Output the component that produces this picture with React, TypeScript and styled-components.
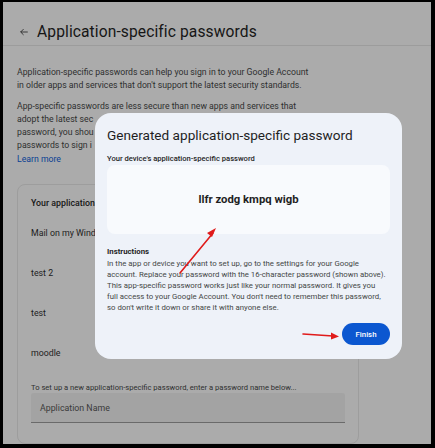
import React from "react";
import styled, { createGlobalStyle } from "styled-components";

const Global = createGlobalStyle`
  html, body { margin: 0; padding: 0; background: #000; }
  body { font-family: Roboto, "Noto Sans", Arial, sans-serif; }
  * { box-sizing: border-box; }
`;

const Frame = styled.div`
  width: 435px;
  height: 448px;
  background: #000;
  padding: 2px 4px 4px 3px;
`;

const Screen = styled.div`
  position: relative;
  width: 100%;
  height: 100%;
  background: #ababab;
  overflow: hidden;
  color: #2c2d2d;
`;

const Header = styled.header`
  display: flex;
  align-items: center;
  gap: 8px;
  height: 44px;
  padding: 16px 0 0 16px;
  border-bottom: 1px solid #9c9c9c;
`;

const BackBtn = styled.span`
  display: flex;
  width: 10px;
  height: 10px;
  color: #222;
`;

const Title = styled.h1`
  margin: 0;
  font-size: 15.6px;
  font-weight: 400;
  color: #161616;
  letter-spacing: 0.1px;
`;

const Content = styled.main`
  padding: 20px 0 0 14px;
  width: 356px;
`;

const Para = styled.p`
  margin: 0 0 7px;
  font-size: 8.7px;
  line-height: 13.3px;
  color: #2e2f2f;
  white-space: nowrap;
`;

const Link = styled.a`
  color: #0a3f93;
  text-decoration: none;
`;

const Card = styled.section`
  margin-top: 18px;
  border: 1px solid #9d9d9d;
  border-radius: 8px;
  padding: 11px 13px 20px;
`;

const CardTitle = styled.div`
  font-size: 8.8px;
  font-weight: 500;
  color: #161616;
  height: 26px;
  line-height: 14px;
`;

const AppRow = styled.div`
  font-size: 8.8px;
  color: #1d1d1d;
  height: 40px;
  line-height: 14px;
  padding-top: 4px;
`;

const Hint = styled.div`
  font-size: 7.6px;
  color: #2e2f2f;
  margin-top: 0;
  line-height: 11px;
`;

const NameInput = styled.div`
  height: 30px;
  background: #a3a3a3;
  border-bottom: 1px solid #6a6a6a;
  border-radius: 3px 3px 0 0;
  padding-left: 9px;
  display: flex;
  align-items: center;
  font-size: 8.8px;
  color: #3a3a3a;
`;

const Dialog = styled.div`
  position: absolute;
  left: 92px;
  top: 111px;
  width: 307px;
  height: 246px;
  background: #eef2f9;
  border-radius: 16px;
  padding: 13px 12px 0;
  display: flex;
  flex-direction: column;
`;

const DialogTitle = styled.h2`
  margin: 0;
  font-size: 13.6px;
  font-weight: 400;
  color: #1f1f1f;
  line-height: 18px;
`;

const Label = styled.div`
  margin-top: 10px;
  font-size: 7.6px;
  font-weight: 500;
  color: #1f1f1f;
  line-height: 10px;
`;

const PassBox = styled.div`
  margin-top: 1px;
  height: 69px;
  background: #f8fafd;
  border-radius: 8px;
  display: flex;
  align-items: center;
  justify-content: center;
  font-size: 11.3px;
  font-weight: 700;
  color: #1f1f1f;
`;

const InstrTitle = styled.div`
  margin-top: 13px;
  font-size: 7.8px;
  font-weight: 700;
  color: #1f1f1f;
  line-height: 10px;
`;

const InstrText = styled.p`
  margin: 1px 0 0;
  font-size: 7.8px;
  line-height: 11px;
  color: #444746;
`;

const Actions = styled.div`
  display: flex;
  justify-content: flex-end;
  margin-top: 10px;
`;

const FinishBtn = styled.button`
  width: 48px;
  height: 22px;
  border: none;
  border-radius: 11px;
  background: #0b57d0;
  color: #fff;
  font-family: inherit;
  font-size: 7.8px;
  font-weight: 500;
  padding: 0;
`;

const Arrows = styled.svg`
  position: absolute;
  left: 0;
  top: 0;
  width: 100%;
  height: 100%;
  pointer-events: none;
`;

const apps = ["Mail on my Windows Computer", "test 2", "test", "moodle"];

export default function App() {
  return (
    <>
      <Global />
      <Frame>
        <Screen>
          <Header>
            <BackBtn>
              <svg viewBox="0 0 24 24" width="10" height="10" fill="none" stroke="currentColor" strokeWidth="2">
                <path d="M21 12H4M11 5l-7 7 7 7" />
              </svg>
            </BackBtn>
            <Title>Application-specific passwords</Title>
          </Header>
          <Content>
            <Para>
              Application-specific passwords can help you sign in to your Google Account
              <br />
              in older apps and services that don't support the latest security standards.
            </Para>
            <Para>
              App-specific passwords are less secure than new apps and services that
              <br />
              adopt the latest sec
              <br />
              password, you shou
              <br />
              passwords to sign i
              <br />
              <Link>Learn more</Link>
            </Para>
            <Card>
              <CardTitle>Your application passwords</CardTitle>
              {apps.map((a) => (
                <AppRow key={a}>{a}</AppRow>
              ))}
              <Hint>To set up a new application-specific password, enter a password name below...</Hint>
              <NameInput>Application Name</NameInput>
            </Card>
          </Content>
          <Dialog>
            <DialogTitle>Generated application-specific password</DialogTitle>
            <Label>Your device's application-specific password</Label>
            <PassBox>llfr zodg kmpq wigb</PassBox>
            <InstrTitle>Instructions</InstrTitle>
            <InstrText>
              In the app or device you want to set up, go to the settings for your Google
              <br />
              account. Replace your password with the 16-character password (shown above).
              <br />
              This app-specific password works just like your normal password. It gives you
              <br />
              full access to your Google Account. You don't need to remember this password,
              <br />
              so don't write it down or share it with anyone else.
            </InstrText>
            <Actions>
              <FinishBtn>Finish</FinishBtn>
            </Actions>
          </Dialog>
          <Arrows viewBox="0 0 428 442">
            <g stroke="#e01b1b" strokeWidth="1.6" fill="#e01b1b" strokeLinecap="round">
              <line x1="177" y1="271" x2="210" y2="231" />
              <polygon points="213,226 204,231 209,235" stroke="none" />
              <line x1="300" y1="332" x2="330" y2="334" />
              <polygon points="336,334.5 328,330.5 328,337.5" stroke="none" />
            </g>
          </Arrows>
        </Screen>
      </Frame>
    </>
  );
}
